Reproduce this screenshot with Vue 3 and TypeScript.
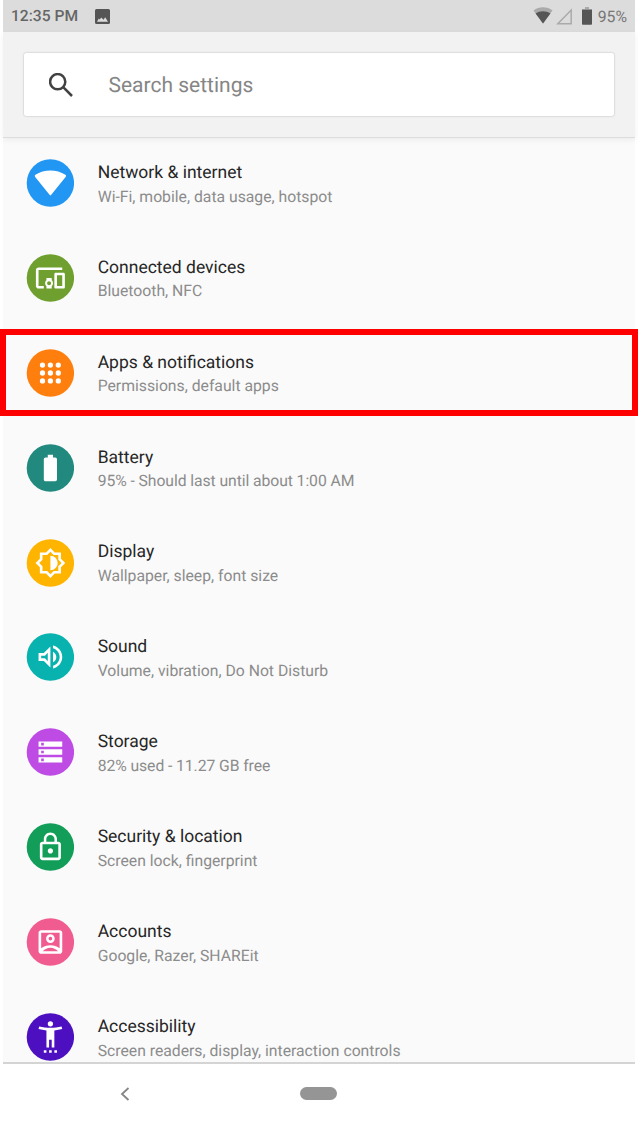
<script setup lang="ts">
interface SettingItem {
  title: string
  summary: string
  tone: string
  path: string
  highlighted?: boolean
  numeric?: boolean
}

const items: SettingItem[] = [
  {
    title: 'Network & internet',
    summary: 'Wi-Fi, mobile, data usage, hotspot',
    tone: 'blue',
    path: 'M12.5 21.2 23.7 7.2Q24.2 6.3 23.4 5.8C16.8 1.4 7.2 1.4 .6 5.8Q-.2 6.3 .3 7.2L11.5 21.2Q12 21.7 12.5 21.2z',
  },
  {
    title: 'Connected devices',
    summary: 'Bluetooth, NFC',
    tone: 'green',
    path: 'M3 6h18V4H3c-1.1 0-2 .9-2 2v12c0 1.1.9 2 2 2h4v-2H3V6zm10 6H9v1.78c-.61.55-1 1.33-1 2.22s.39 1.67 1 2.22V20h4v-1.78c.61-.55 1-1.34 1-2.22s-.39-1.67-1-2.22V12zm-2 5.5c-.83 0-1.5-.67-1.5-1.5s.67-1.5 1.5-1.5 1.5.67 1.5 1.5-.67 1.5-1.5 1.5zM22 8h-6c-.5 0-1 .5-1 1v10c0 .5.5 1 1 1h6c.5 0 1-.5 1-1V9c0-.5-.5-1-1-1zm-1 10h-4v-8h4v8z',
  },
  {
    title: 'Apps & notifications',
    summary: 'Permissions, default apps',
    tone: 'orange',
    highlighted: true,
    path: 'M4 6a2 2 0 1 0 4 0a2 2 0 1 0-4 0M10 6a2 2 0 1 0 4 0a2 2 0 1 0-4 0M16 6a2 2 0 1 0 4 0a2 2 0 1 0-4 0M4 12a2 2 0 1 0 4 0a2 2 0 1 0-4 0M10 12a2 2 0 1 0 4 0a2 2 0 1 0-4 0M16 12a2 2 0 1 0 4 0a2 2 0 1 0-4 0M4 18a2 2 0 1 0 4 0a2 2 0 1 0-4 0M10 18a2 2 0 1 0 4 0a2 2 0 1 0-4 0M16 18a2 2 0 1 0 4 0a2 2 0 1 0-4 0',
  },
  {
    title: 'Battery',
    summary: '95% - Should last until about 1:00 AM',
    tone: 'teal',
    numeric: true,
    path: 'M15.67 4H14V2h-4v2H8.33C7.6 4 7 4.6 7 5.33v15.33C7 21.4 7.6 22 8.33 22h7.33c.74 0 1.34-.6 1.34-1.33V5.33C17 4.6 16.4 4 15.67 4z',
  },
  {
    title: 'Display',
    summary: 'Wallpaper, sleep, font size',
    tone: 'amber',
    path: 'M20 8.69V4h-4.69L12 .69 8.69 4H4v4.69L.69 12 4 15.31V20h4.69L12 23.31 15.31 20H20v-4.69L23.31 12 20 8.69zm-2 5.79V18h-3.52L12 20.48 9.52 18H6v-3.52L3.52 12 6 9.52V6h3.52L12 3.52 14.48 6H18v3.52L20.48 12 18 14.48zM12 6.5v11c3.03 0 5.5-2.47 5.5-5.5S15.03 6.5 12 6.5z',
  },
  {
    title: 'Sound',
    summary: 'Volume, vibration, Do Not Disturb',
    tone: 'cyan',
    path: 'M3 9v6h4l5 5V4L7 9H3zm7-.17v6.34L7.83 13H5v-2h2.83L10 8.83zM16.5 12c0-1.77-1.02-3.29-2.5-4.03v8.05c1.48-.73 2.5-2.25 2.5-4.02zM14 3.23v2.06c2.89.86 5 3.54 5 6.71s-2.11 5.85-5 6.71v2.06c4.01-.91 7-4.49 7-8.77s-2.99-7.86-7-8.77z',
  },
  {
    title: 'Storage',
    summary: '82% used - 11.27 GB free',
    tone: 'purple',
    numeric: true,
    path: 'M3 20h18v-4H3v4zm2-3h2v2H5v-2zM3 4v4h18V4H3zm4 3H5V5h2v2zm-4 7h18v-4H3v4zm2-3h2v2H5v-2z',
  },
  {
    title: 'Security & location',
    summary: 'Screen lock, fingerprint',
    tone: 'emerald',
    path: 'M12 17c1.1 0 2-.9 2-2s-.9-2-2-2-2 .9-2 2 .9 2 2 2zm6-9h-1V6c0-2.76-2.24-5-5-5S7 3.24 7 6v2H6c-1.1 0-2 .9-2 2v10c0 1.1.9 2 2 2h12c1.1 0 2-.9 2-2V10c0-1.1-.9-2-2-2zM8.9 6c0-1.71 1.39-3.1 3.1-3.1s3.1 1.39 3.1 3.1v2H8.9V6zM18 20H6V10h12v10z',
  },
  {
    title: 'Accounts',
    summary: 'Google, Razer, SHAREit',
    tone: 'pink',
    path: 'M19 3H5c-1.1 0-2 .9-2 2v14c0 1.1.9 2 2 2h14c1.1 0 2-.9 2-2V5c0-1.1-.9-2-2-2zM5 5h14v11.8C17.2 15.300 14.6 14.400 12 14.400S6.800 15.300 5 16.800zM6.200 19.100C7.800 17.300 9.800 16.400 12 16.400s4.200.9 5.800 2.700zM12 12.700a3.300 3.300 0 1 0 0-6.600a3.300 3.300 0 0 0 0 6.600zM12 10.800a1.400 1.400 0 1 1 0-2.800a1.400 1.400 0 0 1 0 2.800z',
  },
  {
    title: 'Accessibility',
    summary: 'Screen readers, display, interaction controls',
    tone: 'indigo',
    path: 'M12 0a2 2 0 1 1 0 4a2 2 0 0 1 0-4zM20.5 4l.5 2c-1.86.5-4 .83-6 1v13h-2v-6h-2v6H9V7c-2-.17-4.140-.5-6-1l.5-2c2.610.7 5.670 1 8.500 1s5.890-.3 8.500-1zM7 22h2v2H7zM11 22h2v2h-2zM15 22h2v2h-2z',
  },
]
</script>

<template>
  <div class="page">
    <div class="phone">
      <header class="status">
        <span class="time">12:35 PM</span>
        <svg class="photo" viewBox="0 0 15 15"><path fill-rule="evenodd" d="M1.500 0h12Q15 0 15 1.500v12q0 1.500-1.500 1.500h-12Q0 15 0 13.500v-12Q0 0 1.500 0zM2 12.800h11L10.200 8.200 8.500 10.700 6.200 8.500 4.800 10.500 3.800 9.600z" /></svg>
        <span class="spacer"></span>
        <svg class="wifi" viewBox="0 0 20 17"><path class="faint" d="M10 16.500.5 3.500C6-.8 14-.8 19.500 3.500z" /><path d="M10 16.500 2.600 6.400C7 3.400 13 3.400 17.400 6.400z" /></svg>
        <svg class="signal" viewBox="0 0 17 17"><path d="M15.200 2v13.700H1.800z" /></svg>
        <svg class="cell" viewBox="0 0 10 18"><path class="faint" d="M3 0h4v2H3zM0 2h10v2H0z" /><path d="M0 2.800h10v14.200q0 .8-.8.8H.8Q0 17.800 0 17z" /></svg>
        <span class="percent">95%</span>
      </header>

      <div class="search-area">
        <div class="search">
          <svg class="lens" viewBox="0 0 24 24"><circle cx="8.700" cy="8.700" r="7.600" /><path d="M14.200 14.200 23 23" /></svg>
          <span class="hint">Search settings</span>
        </div>
      </div>

      <main class="list">
        <div v-for="item in items" :key="item.title" class="row" :class="{ highlighted: item.highlighted }">
          <svg class="badge" :class="item.tone" viewBox="-6.530 -6.230 36.460 36.460">
            <circle cx="12" cy="12" r="18" />
            <path fill-rule="evenodd" :d="item.path" />
          </svg>
          <div class="copy">
            <div class="title">{{ item.title }}</div>
            <div class="summary" :class="{ numeric: item.numeric }">{{ item.summary }}</div>
          </div>
        </div>
      </main>

      <nav class="nav">
        <svg class="back" viewBox="0 0 10 14"><path d="M8.500 1 2 7l6.500 6" /></svg>
        <span class="home"></span>
      </nav>
    </div>
  </div>
</template>

<style>
body {
  margin: 0;
  background: #fff;
}
</style>

<style scoped>
.page {
  width: 638px;
  height: 1125px;
  padding: 0 3px;
  box-sizing: border-box;
  overflow: hidden;
  background: #fff;
  font-family: Roboto, sans-serif;
  text-rendering: geometricPrecision;
}
.phone {
  display: flex;
  flex-direction: column;
  height: 1125px;
}
.status {
  display: flex;
  align-items: center;
  height: 32px;
  box-sizing: border-box;
  padding: 0 8px;
  background: #dcdcdc;
  color: #666;
  fill: #555;
}
.time {
  width: 84px;
  font-size: 15.600px;
  font-weight: 500;
  white-space: nowrap;
}
.photo {
  width: 15px;
  height: 15px;
}
.spacer {
  flex: 1;
}
.faint {
  fill: #aaa;
}
.wifi {
  width: 20px;
  height: 17px;
  margin-right: 3px;
  transform: translateY(-1px);
}
.signal {
  width: 17px;
  height: 17px;
  fill: none;
  stroke: #aaa;
  stroke-width: 1.5;
}
.cell {
  width: 10px;
  height: 18px;
  margin: 0 6px 0 9px;
}
.percent {
  font-size: 15.800px;
  color: #777;
}
.search-area {
  position: relative;
  z-index: 1;
  height: 106px;
  box-sizing: border-box;
  padding: 21px 21px 0;
  background: #f2f2f2;
  border-bottom: 1px solid #dcdcdc;
  box-shadow: 0 2px 6px rgba(0, 0, 0, 0.06);
}
.search {
  display: flex;
  align-items: center;
  height: 63px;
  padding-left: 25px;
  background: #fff;
  border-radius: 2px;
  box-shadow: 0 0 2px rgba(0, 0, 0, 0.3);
  color: #858585;
  font-size: 21px;
}
.hint {
  padding-top: 2px;
}
.lens {
  width: 24px;
  height: 24px;
  margin-right: 35.500px;
  fill: none;
  stroke: #424242;
  stroke-width: 2.5;
}
.list {
  flex: 1;
  min-height: 0;
  background: #fafafa;
}
.row {
  position: relative;
  display: flex;
  align-items: center;
  height: 94.900px;
  box-sizing: border-box;
  padding-left: 23px;
}
.row:first-child {
  margin-top: -2.500px;
}
.highlighted::after {
  content: '';
  position: absolute;
  left: -3px;
  top: 3.700px;
  width: 638px;
  height: 87px;
  box-sizing: border-box;
  border: 6px solid #f00;
}
.badge {
  width: 48px;
  height: 48px;
  margin-right: 23.700px;
}
.badge path {
  fill: #fff;
}
.blue { fill: #2196f3; }
.green { fill: #6fa02f; }
.orange { fill: #ff7f0e; }
.teal { fill: #22897e; }
.amber { fill: #ffb400; }
.cyan { fill: #08b2ae; }
.purple { fill: #bd4be4; }
.emerald { fill: #129d58; }
.pink { fill: #f05c90; }
.indigo { fill: #4d10c0; }
.copy {
  padding-top: 3.600px;
}
.title {
  height: 22.700px;
  line-height: 23px;
  font-size: 17.500px;
  color: #262626;
  white-space: nowrap;
}
.summary {
  height: 23px;
  line-height: 23px;
  font-size: 15.740px;
  color: #8c8c8c;
  white-space: nowrap;
}
.numeric {
  letter-spacing: -0.080px;
}
.nav {
  position: relative;
  z-index: 1;
  display: flex;
  align-items: center;
  height: 63px;
  box-sizing: border-box;
  padding: 0 0 2px 116.500px;
  border-top: 2px solid #d4d4d4;
  background: #fff;
}
.back {
  width: 10px;
  height: 14px;
  fill: none;
  stroke: #858585;
  stroke-width: 1.800;
}
.home {
  width: 37px;
  height: 13.500px;
  margin-left: 170.500px;
  border-radius: 7px;
  background: #959595;
}
</style>
